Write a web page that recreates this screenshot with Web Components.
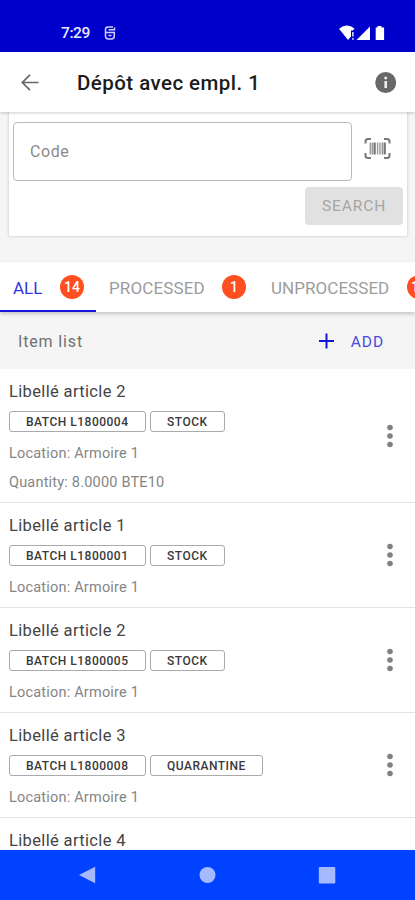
<!DOCTYPE html>
<html lang="en"><head><meta charset="utf-8"><title>Dépôt avec empl. 1</title>
<style>
html,body{margin:0;height:100%}
body{font-family:Roboto,"Liberation Sans",sans-serif;background:#f5f5f5;overflow:hidden}
</style></head><body>
<stock-app></stock-app>
<script>
const define = (name, html, setup) => customElements.define(name, class extends HTMLElement {
  constructor() {
    super();
    const t = document.createElement('template');
    t.innerHTML = html;
    this.attachShadow({ mode: 'open' }).append(t.content.cloneNode(true));
  }
  connectedCallback() { if (setup) setup(this, this.shadowRoot); }
});

define('status-bar', `<style>
:host{display:flex;box-sizing:border-box;height:52px;background:#0000cb;color:#e9e9ff;padding:13px 28px 0 61px;align-items:center}
.t{font-size:15.5px;font-weight:500;letter-spacing:-.4px;line-height:20px;width:43px}
.s{flex:1}svg{display:block}
</style><span class="t">7:29</span>
<svg width="12" height="14" viewBox="0 0 12 14" fill="none" stroke="#d0d0ff" stroke-width="1.500"><path d="M9 1H4Q1.500 1 1.500 3.500V10Q1.500 13 4.500 13H7.300Q10.300 13 10.300 10V6.500H1.500M4.500 3.700H10.500V1.500M4.500 9.500H7.500"/></svg>
<span class="s"></span>
<svg width="48" height="16" viewBox="0 0 48 16" fill="#fff"><path d="M0 3.800Q8-2.600 15.500 3.600L14 5.500H12V11.500L9 15Z"/><path d="M13 7h1.800v4.500H13zM13 13h1.800v1.800H13z" opacity=".75"/><path d="M31 1.500V15H17.500ZM38.500 1h4v1.500h2.600V15H36.700V2.500H38.500Z"/></svg>`);

define('app-bar', `<style>
:host{display:flex;box-sizing:border-box;height:60px;background:#fff;align-items:center;padding:2px 17px 0 18px;box-shadow:0 1px 3px #0003;position:relative;z-index:1}
h1{margin:0 0 0 35px;font-size:20.500px;font-weight:500;letter-spacing:.45px;color:#1c1c1c;flex:1;line-height:26px;white-space:nowrap}
svg{display:block}
</style><svg width="24" height="24" viewBox="0 0 24 24" fill="none" stroke="#666" stroke-width="1.7"><path d="M20.500 11.500H4.500M12 3.800L4.300 11.500L12 19.200"/></svg>
<h1><slot></slot></h1>
<svg width="24" height="24" viewBox="0 0 24 24"><circle cx="11.700" cy="11.500" r="10.500" fill="#686868"/><path d="M10.400 10h2.600V17h-2.600zM10.400 5.800h2.600V8.300h-2.600z" fill="#eee"/></svg>`);

define('search-card', `<style>
:host{display:block;box-sizing:border-box;margin:0 8px 0 9px;height:124px;background:#fff;padding:10px 4px 0;box-shadow:0 0 2px 1px #0000001c}
.row{display:flex;align-items:flex-start}
.f{box-sizing:border-box;width:339px;height:59px;border:1.500px solid #b9b9b9;border-radius:4px;padding-left:16px;font-size:16px;letter-spacing:.6px;line-height:57px;color:#8a8a8a}
svg{margin:14px 0 0 12px}
.b{margin:6px 0 0 auto;width:98px;height:38px;border-radius:4px;background:#e1e1e1;color:#a6a6a6;font-size:15.500px;letter-spacing:.9px;line-height:39px;text-align:center}
</style><div class="row"><div class="f">Code</div>
<svg width="27" height="24" viewBox="0 0 27 24" fill="none" stroke="#777"><path stroke-width="2" d="M1.500 7.500V5.500Q1.500 3 4 3H7M20 3H23Q25.500 3 25.500 5.500V7.500M25.500 17V19.500Q25.500 22 23 22H20M7 22H4Q1.500 22 1.500 19.500V17"/><path stroke-width="2.300" d="M10.600 6.500V18.500M20.700 6.500V18.500"/><path stroke-width="1.400" d="M6.300 6.500V18.500M8.300 6.500V18.500M13.600 6.500V18.500M16 6.500V18.500M18.300 6.500V18.500" stroke="#999"/></svg></div>
<div class="b">SEARCH</div>`);

define('count-tab', `<style>
:host{display:flex;flex:none;box-sizing:border-box;height:50px;align-items:center;padding:0 12px 0 13px;color:#9c9c9c;font-size:17px;white-space:nowrap}
:host([active]){color:#3434df;border-bottom:2px solid #1515d8;padding-top:2px}
.l{flex:1;letter-spacing:var(--ls,0);padding-top:1px}
b{display:block;width:24px;height:24px;border-radius:50%;background:#ff4f20;color:#fff;font-size:14px;font-weight:500;line-height:25px;text-align:center}
</style><span class="l"><slot></slot></span><b></b>`, (h, r) => { r.querySelector('b').textContent = h.getAttribute('count'); });

define('tab-strip', `<style>
:host{display:flex;height:50px;margin-top:26px;background:#fff;overflow:visible;box-shadow:0 2px 4px #0003;position:relative;z-index:1}
</style><slot></slot>`);

define('list-header', `<style>
:host{display:flex;height:57px;align-items:center;box-sizing:border-box;padding:2px 31px 0 18px;font-size:16px;color:#707070;letter-spacing:.85px}
.t{flex:1}.a{color:#4a4ae0;font-size:15.500px;letter-spacing:.9px}svg{margin:-2px 16px 0 0}
</style><span class="t">Item list</span><svg width="17" height="16" viewBox="0 0 17 16" stroke="#1515d8" stroke-width="2"><path d="M1 8H16M8.500 .5V15.500"/></svg><span class="a">ADD</span>`);

define('tag-chip', `<style>
:host{display:block;box-sizing:border-box;height:21px;border:1px solid #aaa;border-radius:3px;padding:0 0 0 16px;font-size:12px;font-weight:500;line-height:20px;letter-spacing:.5px;color:#3a3a3a;white-space:nowrap}
</style><slot></slot>`);

define('stock-item', `<style>
:host{display:flex;box-sizing:border-box;background:#fff;border-bottom:1.500px solid #e3e3e3;padding:11px 18px 5px 9px;align-items:center}
.m{flex:1}.t{font-size:16.500px;line-height:24px;height:24px;letter-spacing:.35px;color:#444}
.c{display:flex;gap:4px;margin:7px 0}
.d{font-size:14.500px;line-height:30px;height:29px;letter-spacing:.2px;color:#858585}
svg{display:block;margin-top:-6px}
</style><div class="m"><div class="t"></div><div class="c"></div></div>
<svg width="14" height="24" viewBox="0 0 14 24" fill="#808080"><circle cx="7" cy="3.500" r="2.800"/><circle cx="7" cy="12" r="2.800"/><circle cx="7" cy="20.500" r="2.800"/></svg>`, (h, r) => {
  r.querySelector('.t').textContent = h.getAttribute('name');
  if (!h.hasAttribute('batch')) { r.querySelector('svg').remove(); return; }
  const widths = { STOCK: 75, QUARANTINE: 113 };
  for (const tag of ['BATCH ' + h.getAttribute('batch'), h.getAttribute('state')]) {
    const c = document.createElement('tag-chip');
    c.textContent = tag;
    c.style.width = (widths[tag] || 137) + 'px';
    r.querySelector('.c').append(c);
  }
  for (const line of ['Location: Armoire 1', h.getAttribute('quantity')]) {
    if (!line) continue;
    const d = document.createElement('div');
    d.className = 'd'; d.textContent = line;
    r.querySelector('.m').append(d);
  }
});

define('nav-bar', `<style>
:host{display:flex;flex:none;height:50px;background:#0042ff;align-items:center;justify-content:space-between;padding:0 79px 0 78px;position:relative}
svg{display:block}
</style><svg width="18" height="18" fill="#a5b9ff"><path d="M1 9L17.200 .8V17.200Z"/></svg>
<svg width="18" height="18" fill="#a5b9ff"><circle cx="9.500" cy="9" r="8"/></svg>
<svg width="18" height="18" fill="#a5b9ff"><rect x=".8" y="1" width="16.500" height="16.500" rx="1"/></svg>`);

define('stock-app', `<style>
:host{display:flex;flex-direction:column;width:415px;height:900px;overflow:hidden;background:#f5f5f5}
main{flex:1;min-height:0;overflow:hidden}
stock-item:last-child{border:0}
</style>
<status-bar></status-bar><app-bar>Dépôt avec empl. 1</app-bar>
<main><search-card></search-card>
<tab-strip><count-tab active count="14" style="width:96px">ALL</count-tab><count-tab count="1" style="width:162px;--ls:.12px">PROCESSED</count-tab><count-tab count="13" style="width:185px;--ls:.05px">UNPROCESSED</count-tab></tab-strip>
<list-header></list-header>
<stock-item name="Libellé article 2" batch="L1800004" state="STOCK" quantity="Quantity: 8.0000 BTE10"></stock-item>
<stock-item name="Libellé article 1" batch="L1800001" state="STOCK"></stock-item>
<stock-item name="Libellé article 2" batch="L1800005" state="STOCK"></stock-item>
<stock-item name="Libellé article 3" batch="L1800008" state="QUARANTINE"></stock-item>
<stock-item name="Libellé article 4"></stock-item>
</main><nav-bar></nav-bar>`);
</script></body></html>
